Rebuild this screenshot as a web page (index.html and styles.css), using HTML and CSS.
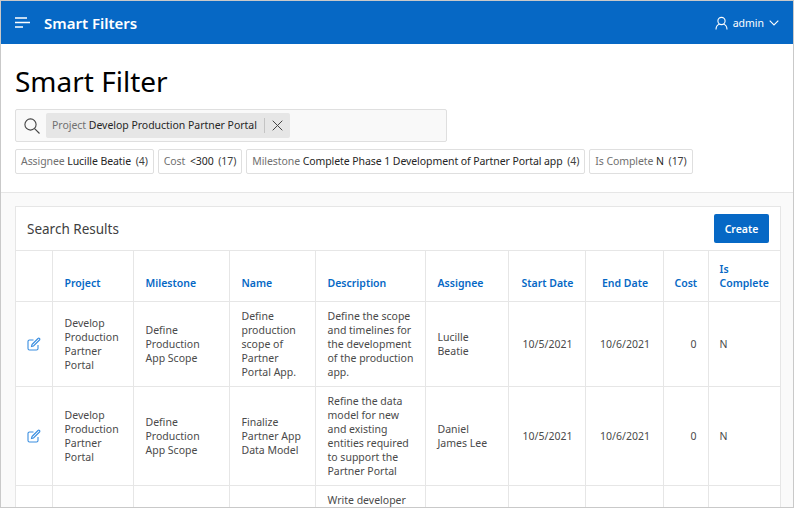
FILE: index.html
```html
<!DOCTYPE html>
<html lang="en">
<head>
    <meta charset="UTF-8">
    <meta name="viewport" content="width=device-width, initial-scale=1.0">
    <title>Smart Filters</title>
    <link rel="stylesheet" href="styles.css">
</head>
<body>

<div class="page">
    <!-- Top bar -->
    <header class="topbar">
        <svg class="menu-icon" width="16" height="11" viewBox="0 0 16 11">
            <path d="M0 1H12M0 5.500H15M0 10H8" stroke="#fff" stroke-width="1.6" fill="none"/>
        </svg>
        <span class="app-name">Smart Filters</span>
        <div class="user-menu">
            <svg width="13" height="14" viewBox="0 0 13 14" fill="none" stroke="#fff" stroke-width="1.1">
                <circle cx="6.500" cy="5" r="3.600"/>
                <path d="M1 13.500C1 10.500 3 8.600 4.500 8.200M12 13.500C12 10.500 10 8.600 8.500 8.200"/>
            </svg>
            <span class="user-name">admin</span>
            <svg width="10" height="6" viewBox="0 0 10 6" fill="none" stroke="#fff" stroke-width="1.1">
                <path d="M.7.7 5 5 9.300.7"/>
            </svg>
        </div>
    </header>

    <!-- Title and filters -->
    <section class="filter-area">
        <h1>Smart Filter</h1>
        <div class="search-box">
            <svg class="search-icon" width="16" height="16" viewBox="0 0 16 16" fill="none" stroke="#444" stroke-width="1.1">
                <circle cx="6.500" cy="6.500" r="5.600"/>
                <path d="M10.600 10.600 15.500 15.500"/>
            </svg>
            <div class="active-filter">
                <span class="filter-text"><span class="label">Project</span> Develop Production Partner Portal</span>
                <span class="clear">
                    <svg width="11" height="11" viewBox="0 0 11 11" stroke="#444" stroke-width="1">
                        <path d="M.7.7 10.300 10.300M10.300.7.7 10.300"/>
                    </svg>
                </span>
            </div>
        </div>
        <div class="suggestions">
            <div class="chip"><span class="label">Assignee</span> Lucille Beatie <span class="count">(4)</span></div>
            <div class="chip chip-wide"><span class="label">Cost</span> &lt;300 <span class="count">(17)</span></div>
            <div class="chip"><span class="label">Milestone</span> Complete Phase 1 Development of Partner Portal app <span class="count">(4)</span></div>
            <div class="chip"><span class="label">Is Complete</span> N <span class="count">(17)</span></div>
        </div>
    </section>

    <!-- Results -->
    <section class="results-area">
        <div class="card">
            <div class="card-header">
                <h2>Search Results</h2>
                <button type="button">Create</button>
            </div>
            <table class="results">
                <colgroup>
                    <col class="col-edit"><col class="col-project"><col class="col-milestone"><col class="col-name">
                    <col class="col-desc"><col class="col-assignee"><col class="col-start"><col class="col-end">
                    <col class="col-cost"><col class="col-complete">
                </colgroup>
                <tr>
                    <th></th>
                    <th>Project</th>
                    <th>Milestone</th>
                    <th>Name</th>
                    <th>Description</th>
                    <th>Assignee</th>
                    <th class="center">Start Date</th>
                    <th class="center">End Date</th>
                    <th class="right">Cost</th>
                    <th>Is Complete</th>
                </tr>
                <tr>
                    <td class="edit">
                        <svg width="14" height="14" viewBox="0 0 14 14" fill="none" stroke="#3a8ee0" stroke-width="1.1">
                            <path d="M11 8v3.500a1.500 1.500 0 0 1-1.500 1.500h-7A1.500 1.500 0 0 1 1 11.500v-7A1.500 1.500 0 0 1 2.500 3H6.500"/>
                            <path d="M5 7.500 11 1.500a1 1 0 0 1 1.500 0a1 1 0 0 1 0 1.500L6.500 9 4.500 9.500Z"/>
                        </svg>
                    </td>
                    <td>Develop Production Partner Portal</td>
                    <td>Define Production App Scope</td>
                    <td>Define production scope of Partner Portal App.</td>
                    <td>Define the scope and timelines for the development of the production app.</td>
                    <td>Lucille Beatie</td>
                    <td class="center">10/5/2021</td>
                    <td class="center">10/6/2021</td>
                    <td class="right">0</td>
                    <td>N</td>
                </tr>
                <tr>
                    <td class="edit">
                        <svg width="14" height="14" viewBox="0 0 14 14" fill="none" stroke="#3a8ee0" stroke-width="1.1">
                            <path d="M11 8v3.500a1.500 1.500 0 0 1-1.500 1.500h-7A1.500 1.500 0 0 1 1 11.500v-7A1.500 1.500 0 0 1 2.500 3H6.500"/>
                            <path d="M5 7.500 11 1.500a1 1 0 0 1 1.500 0a1 1 0 0 1 0 1.500L6.500 9 4.500 9.500Z"/>
                        </svg>
                    </td>
                    <td>Develop Production Partner Portal</td>
                    <td>Define Production App Scope</td>
                    <td>Finalize Partner App Data Model</td>
                    <td>Refine the data model for new and existing entities required to support the Partner Portal</td>
                    <td>Daniel James Lee</td>
                    <td class="center">10/5/2021</td>
                    <td class="center">10/6/2021</td>
                    <td class="right">0</td>
                    <td>N</td>
                </tr>
                <tr>
                    <td class="edit"></td>
                    <td></td>
                    <td></td>
                    <td></td>
                    <td>Write developer</td>
                    <td></td>
                    <td></td>
                    <td></td>
                    <td></td>
                    <td></td>
                </tr>
            </table>
        </div>
    </section>
</div>

</body>
</html>
```

FILE: styles.css
```css
html, body {
    margin: 0;
    padding: 0;
    height: 100%;
    overflow: hidden;
}

body {
    font-family: "Noto Sans", "Open Sans", Arial, sans-serif;
    font-size: 10.5px;
    line-height: 14px;
    color: #4a4a4a;
    background-color: #fff;
}

.page {
    height: 508px;
    box-sizing: border-box;
    border: 1px solid #c9c9c9;
    overflow: hidden;
}

.topbar {
    display: flex;
    align-items: center;
    height: 43px;
    background-color: #0668c5;
    color: #fff;
    padding: 0 14px;
}

.menu-icon {
    margin-right: 13px;
}

.app-name {
    font-size: 15px;
    font-weight: 600;
}

.user-menu {
    display: flex;
    align-items: center;
    margin-left: auto;
    gap: 5px;
}

.filter-area {
    padding: 18px 14px 18px;
    border-bottom: 1px solid #e6e6e6;
}

h1 {
    margin: 0 0 9px;
    font-size: 28px;
    line-height: 38px;
    font-weight: 400;
    color: #000;
}

.search-box {
    display: flex;
    align-items: center;
    box-sizing: border-box;
    width: 432px;
    height: 33px;
    border: 1px solid #dfdfdf;
    border-radius: 2px;
    background-color: #f9f9f9;
    padding: 0 8px;
}

.search-icon {
    margin-right: 6px;
}

.active-filter {
    display: flex;
    align-items: center;
    height: 25px;
    padding: 0 6px;
    border-radius: 2px;
    background-color: #e6e6e6;
    color: #262626;
    white-space: nowrap;
}

.filter-text {
    padding-bottom: 2px;
    letter-spacing: -0.03px;
}

.clear {
    display: flex;
    align-items: center;
    height: 15px;
    margin-left: 7px;
    padding: 0 1px 0 7px;
    border-left: 1px solid #c4c4c4;
}

.label {
    color: #707070;
}

.suggestions {
    display: flex;
    gap: 4px;
    margin-top: 7px;
}

.chip {
    box-sizing: border-box;
    height: 25px;
    line-height: 23px;
    padding: 0 5px;
    border: 1px solid #dfdfdf;
    border-radius: 2px;
    color: #262626;
    white-space: nowrap;
    letter-spacing: -0.08px;
}

.chip-wide .label {
    margin-right: 2px;
}

.count {
    margin-left: 2px;
    color: #404040;
}

.results-area {
    height: 320px;
    background-color: #fafafa;
    padding: 13px 12px 0 14px;
}

.card {
    border: 1px solid #e6e6e6;
    background-color: #fff;
}

.card-header {
    display: flex;
    align-items: center;
    justify-content: space-between;
    height: 43px;
    padding: 0 11px;
}

h2 {
    margin: 0;
    font-size: 13.5px;
    font-weight: 400;
    color: #404040;
}

button {
    width: 55px;
    height: 29px;
    padding: 0;
    border: none;
    border-radius: 2px;
    background-color: #0668c5;
    color: #fff;
    font-family: inherit;
    font-size: 10.5px;
    font-weight: 600;
}

.results {
    width: 765px;
    table-layout: fixed;
    border-collapse: collapse;
}

.col-edit { width: 36px; }
.col-project { width: 81px; }
.col-milestone { width: 96px; }
.col-name { width: 86px; }
.col-desc { width: 110px; }
.col-assignee { width: 83px; }
.col-start { width: 77px; }
.col-end { width: 78px; }
.col-cost { width: 45px; }
.col-complete { width: 73px; }

.results th, .results td {
    border: 1px solid #e6e6e6;
    padding: 7px 10px 7px 12px;
    text-align: left;
    vertical-align: middle;
    font-weight: 400;
}

.results th:first-child, .results td:first-child {
    border-left: none;
}

.results th:last-child, .results td:last-child {
    border-right: none;
    padding-left: 11px;
}

.results th {
    padding-top: 11px;
    padding-bottom: 11px;
    vertical-align: bottom;
    color: #0668c5;
    font-weight: 600;
}

.results .center {
    text-align: center;
}

.results .right {
    padding-left: 11px;
    padding-right: 11px;
    text-align: right;
}

.results .edit {
    padding: 0;
}

.edit svg {
    display: block;
    margin: 0 auto;
}
```
